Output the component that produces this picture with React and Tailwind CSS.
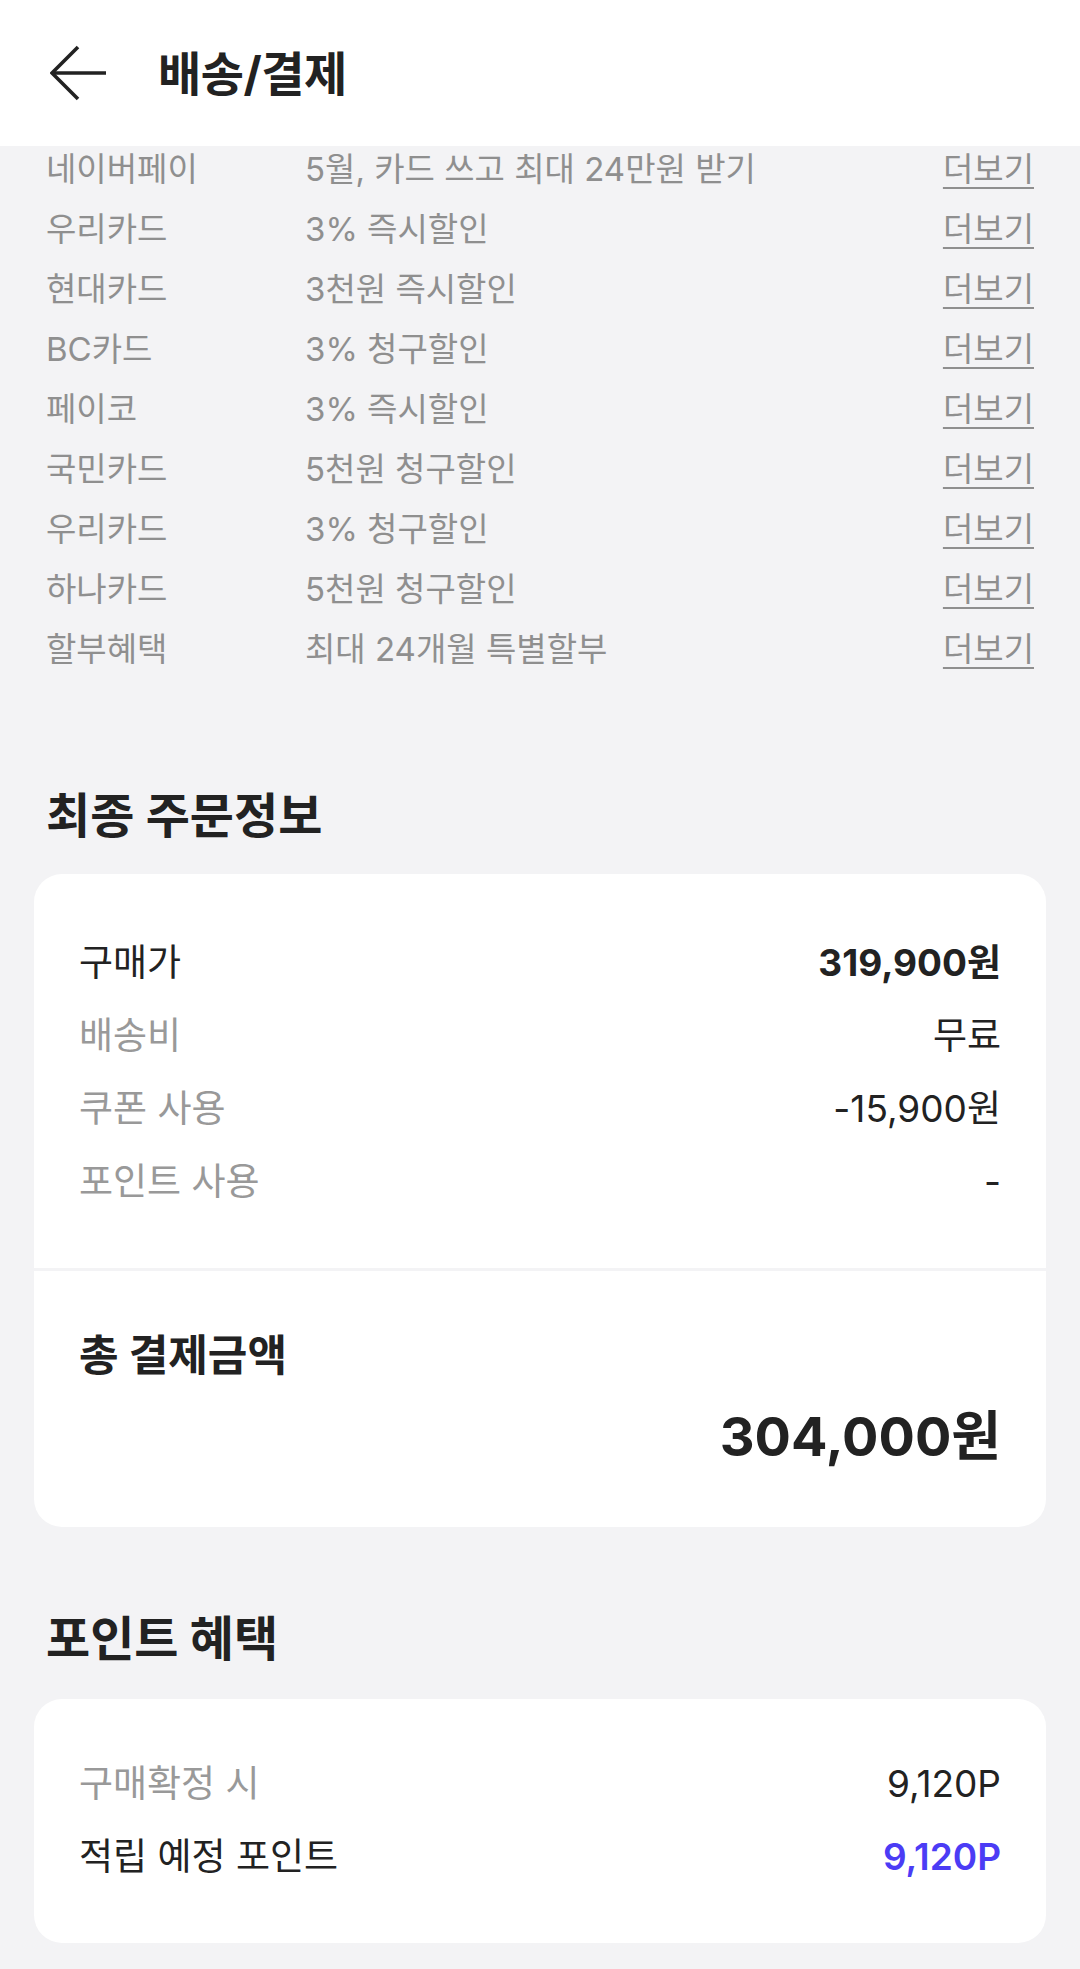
const benefits = [
  { name: "네이버페이", desc: "5월, 카드 쓰고 최대 24만원 받기" },
  { name: "우리카드", desc: "3% 즉시할인" },
  { name: "현대카드", desc: "3천원 즉시할인" },
  { name: "BC카드", desc: "3% 청구할인" },
  { name: "페이코", desc: "3% 즉시할인" },
  { name: "국민카드", desc: "5천원 청구할인" },
  { name: "우리카드", desc: "3% 청구할인" },
  { name: "하나카드", desc: "5천원 청구할인" },
  { name: "할부혜택", desc: "최대 24개월 특별할부" },
];

const Row = ({ label, value, labelClass, valueClass }) => (
  <div className="flex h-[73px] items-center justify-between text-[37px]">
    <span className={labelClass}>{label}</span>
    <span className={valueClass}>{value}</span>
  </div>
);

const App = () => {
  return (
    <div
      className="min-h-[1969px] bg-[#f3f3f5] text-[#222]"
      style={{ fontFamily: 'Inter, "Noto Sans CJK KR", sans-serif' }}
    >
      {/* HEADER */}
      <header className="flex h-[146px] items-center bg-white pl-[50px]">
        <svg width="56" height="56" viewBox="0 0 56 56" fill="none" stroke="#222" strokeWidth="3.6" strokeLinecap="butt" strokeLinejoin="miter">
          <path d="M2 28 H56" />
          <path d="M28 2 L2 28 L28 54" />
        </svg>
        <h1 className="ml-[52px] text-[47px] font-bold leading-none tracking-[-0.5px]">배송/결제</h1>
      </header>

      {/* CARD BENEFITS */}
      <ul className="flex flex-col gap-3 px-[46px] text-[33px] text-[#8f8f8f]">
        {benefits.map((b, i) => (
          <li key={i} className="flex h-12 items-center">
            <span className="w-[259px] shrink-0">{b.name}</span>
            <span className="flex-1">{b.desc}</span>
            <span className="underline decoration-[2px] underline-offset-[6px]">더보기</span>
          </li>
        ))}
      </ul>

      {/* FINAL ORDER */}
      <h2 className="mt-[114px] px-[46px] text-[48px] font-bold leading-[56px]">최종 주문정보</h2>
      <div className="mx-[34px] mt-[30px] overflow-hidden rounded-[28px] bg-white">
        <div className="px-[45px] pt-[52px] pb-[50px]">
          <Row label="구매가" value="319,900원" labelClass="text-[#222]" valueClass="font-bold" />
          <Row label="배송비" value="무료" labelClass="text-[#999]" valueClass="text-[#222]" />
          <Row label="쿠폰 사용" value="-15,900원" labelClass="text-[#999]" valueClass="text-[#222]" />
          <Row label="포인트 사용" value="-" labelClass="text-[#999]" valueClass="text-[#222]" />
        </div>
        <div className="h-[3px] bg-[#f3f3f5]" />
        <div className="flex flex-col px-[45px] pt-[58px] pb-[54px]">
          <span className="text-[43px] font-bold leading-[52px]">총 결제금액</span>
          <span className="mt-5 self-end text-[54px] font-bold leading-[72px]">304,000원</span>
        </div>
      </div>

      {/* POINTS */}
      <h2 className="mt-[84px] px-[46px] text-[48px] font-bold leading-[56px]">포인트 혜택</h2>
      <div className="mx-[34px] mt-[32px] rounded-[28px] bg-white px-[45px] pt-[48px] pb-[50px]">
        <Row label="구매확정 시" value="9,120P" labelClass="text-[#999]" valueClass="text-[#222]" />
        <Row label="적립 예정 포인트" value="9,120P" labelClass="text-[#222]" valueClass="font-semibold text-[#4b3cf5]" />
      </div>
    </div>
  );
};

export default App;
